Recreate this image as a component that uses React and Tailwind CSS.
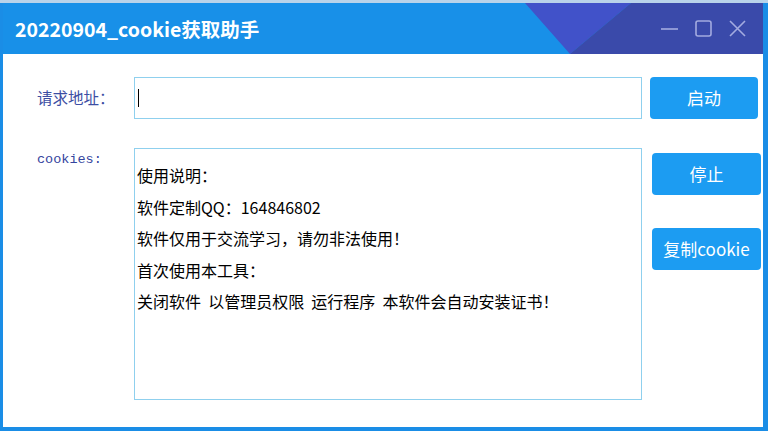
const lines = [
  '使用说明：',
  '软件定制QQ：164846802',
  '软件仅用于交流学习，请勿非法使用！',
  '首次使用本工具：',
  '关闭软件  以管理员权限  运行程序  本软件会自动安装证书！',
];

const cjk = { fontFamily: '"Noto Sans CJK SC", "Noto Sans", sans-serif' };

function TitleBar() {
  return (
    <div className="relative h-[51px] bg-[#1890e8] flex items-center">
      <svg className="absolute inset-0 h-full w-full" viewBox="0 0 760 51" preserveAspectRatio="none">
        <polygon points="522,0 628,0 567,51" fill="#4152c9" />
        <polygon points="628,0 760,0 760,51 567,51" fill="#3a4aaa" />
      </svg>
      <h1 className="relative pl-[12px] text-[19.5px] font-bold text-white" style={cjk}>
        20220904_cookie获取助手
      </h1>
      <div className="relative ml-auto mr-[17px] flex items-center gap-[17px] text-[#a3abe0]">
        <svg width="17" height="17" viewBox="0 0 17 17">
          <line x1="0" y1="9" x2="17" y2="9" stroke="currentColor" strokeWidth="1.6" />
        </svg>
        <svg width="17" height="17" viewBox="0 0 17 17">
          <rect x="1" y="1" width="15" height="15" rx="2" fill="none" stroke="currentColor" strokeWidth="1.6" />
        </svg>
        <svg width="17" height="17" viewBox="0 0 17 17">
          <path d="M1 1 L16 16 M16 1 L1 16" stroke="currentColor" strokeWidth="1.6" />
        </svg>
      </div>
    </div>
  );
}

function BlueButton({ children, w }) {
  return (
    <button className={`${w} h-[42px] rounded-[4px] bg-[#1c9cf2] text-[17px] text-white`} style={cjk}>
      {children}
    </button>
  );
}

export default function App() {
  return (
    <div className="flex h-[431px] w-[768px] flex-col overflow-hidden bg-[#1a8de6]">
      <div className="h-[3px] bg-[#b9d3ea]" />
      <div className="ml-[3px] mr-[5px] mb-[4px] flex flex-1 flex-col">
        <TitleBar />
        <div className="flex-1 bg-white pl-[34px] pt-[23px]">
          <div className="flex items-center">
            <label className="w-[97px] text-[15.5px] text-[#3c4ea3]" style={cjk}>请求地址：</label>
            <div className="flex h-[42px] w-[508px] items-center border border-[#8fd0ee] pl-[3px]">
              <span className="h-[18px] w-px bg-black" />
            </div>
            <BlueButton w="ml-[8px] w-[108px]">启动</BlueButton>
          </div>

          <div className="mt-[29px] flex items-start">
            <label className="w-[97px] pt-[2px] text-[13.5px] text-[#34459e]" style={{ fontFamily: '"Liberation Mono", monospace' }}>
              cookies:
            </label>
            <div className="h-[252px] w-[508px] border border-[#8fd0ee] pl-[2px] pt-[11px] text-[16px] leading-[31.6px] text-black" style={cjk}>
              {lines.map((line) => (
                <div key={line} className="whitespace-pre">{line}</div>
              ))}
            </div>
            <div className="ml-[10px] flex flex-col gap-[33px] pt-[5px]">
              <BlueButton w="w-[109px]">停止</BlueButton>
              <BlueButton w="w-[109px]">复制cookie</BlueButton>
            </div>
          </div>
        </div>
      </div>
    </div>
  );
}
